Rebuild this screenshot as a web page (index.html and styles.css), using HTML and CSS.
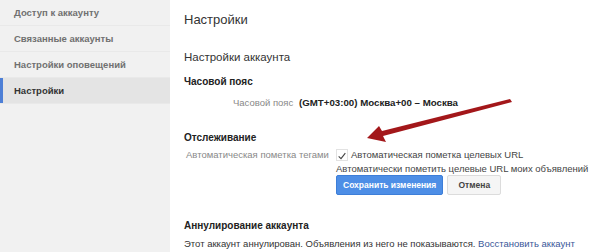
FILE: index.html
```html
<!DOCTYPE html>
<html lang="ru">
<head>
    <meta charset="UTF-8">
    <title>Настройки</title>
    <link rel="stylesheet" href="styles.css">
</head>
<body>
    <div class="page">
        <nav class="sidebar">
            <div class="nav-item">Доступ к аккаунту</div>
            <div class="nav-item">Связанные аккаунты</div>
            <div class="nav-item">Настройки оповещений</div>
            <div class="nav-item active">Настройки</div>
        </nav>

        <main class="content">
            <h1 class="page-title">Настройки</h1>
            <h2 class="section-title">Настройки аккаунта</h2>

            <div class="group">
                <h3 class="group-title">Часовой пояс</h3>
                <div class="tz-row">
                    <span class="field-label">Часовой пояс</span>
                    <span class="tz-value">(GMT+03:00) Москва+00 – Москва</span>
                </div>
            </div>

            <div class="group tracking">
                <h3 class="group-title">Отслеживание</h3>
                <div class="tracking-row">
                    <span class="field-label">Автоматическая пометка тегами</span>
                    <div class="tracking-field">
                        <label class="check">
                            <span class="check-box">
                                <svg width="12" height="12" viewBox="0 0 12 12">
                                    <path d="M2 6.5 L4.8 9.2 L10 2.5" fill="none" stroke="#444" stroke-width="1.3"/>
                                </svg>
                            </span>
                            Автоматическая пометка целевых URL
                        </label>
                        <div class="hint">Автоматически пометить целевые URL моих объявлений</div>
                        <div class="buttons">
                            <button class="btn btn-primary">Сохранить изменения</button>
                            <button class="btn btn-cancel">Отмена</button>
                        </div>
                    </div>
                </div>
            </div>

            <div class="group cancel">
                <h3 class="group-title">Аннулирование аккаунта</h3>
                <p class="note">Этот аккаунт аннулирован. Объявления из него не показываются. <a href="#">Восстановить аккаунт</a></p>
            </div>
        </main>

        <!-- annotation arrow drawn over the page -->
        <svg class="arrow" width="604" height="252" viewBox="0 0 604 252">
            <path d="M510 99 L382 131 L379 126 L367 138 L386 142 L383 136 L512 102 Z" fill="#a3171a"/>
        </svg>
    </div>
</body>
</html>
```

FILE: styles.css
```css
body {
    margin: 0;
    font-family: "Liberation Sans", Arial, sans-serif;
    background-color: #fff;
    color: #222;
}
.page {
    position: relative;
    display: flex;
    width: 604px;
    height: 252px;
    overflow: hidden;
}
.sidebar {
    width: 170px;
    flex-shrink: 0;
    background-color: #f1f1f1;
}
.nav-item {
    height: 25px;
    line-height: 25px;
    padding-left: 14px;
    font-size: 9.5px;
    font-weight: bold;
    color: #707070;
    border-bottom: 1px solid #e9e9e9;
}
.nav-item.active {
    background-color: #e4e4e4;
    color: #333;
    box-shadow: inset 3px 0 0 #4d7fd6;
}
.content {
    flex: 1;
    padding: 10px 0 0 14px;
}
.page-title {
    margin: 0;
    font-size: 13px;
    font-weight: normal;
    line-height: 20px;
    color: #333;
}
.section-title {
    margin: 17px 0 0;
    font-size: 11.5px;
    font-weight: normal;
    line-height: 20px;
    color: #333;
}
.group-title {
    margin: 0;
    font-size: 10px;
    font-weight: bold;
    line-height: 14px;
    color: #222;
}
.group {
    margin-top: 8px;
}
.field-label {
    font-size: 9.5px;
    color: #888;
    white-space: nowrap;
}
.tz-row {
    padding: 7px 0 0 49px;
    font-size: 10px;
    line-height: 14px;
}
.tz-value {
    margin-left: 3px;
    font-size: 9.7px;
    font-weight: bold;
    color: #222;
}
.tracking {
    margin-top: 21px;
}
.tracking-row {
    display: grid;
    grid-template-columns: 150px auto;
    margin-top: 2px;
    padding-left: 2px;
    font-size: 9.5px;
    line-height: 15px;
}
.check {
    display: flex;
    align-items: center;
    gap: 3px;
    height: 15px;
    color: #444;
}
.check-box {
    display: inline-flex;
    width: 12px;
    height: 12px;
    box-sizing: border-box;
    border: 1px solid #e2e2e2;
}
.hint {
    line-height: 13px;
    color: #444;
}
.buttons {
    display: flex;
    gap: 4px;
}
.btn {
    height: 20px;
    padding: 0 6px;
    font-family: inherit;
    font-size: 8.5px;
    font-weight: bold;
    color: #444;
    background-color: #f5f5f5;
    border: 1px solid #dcdcdc;
    border-radius: 2px;
}
.btn-primary {
    color: #fff;
    background-color: #4d8ee6;
    border-color: #3d7ed8;
}
.btn-cancel {
    width: 54px;
}
.cancel {
    margin-top: 24px;
}
.note {
    margin: 4px 0 0;
    font-size: 9.5px;
    line-height: 14px;
    color: #333;
}
.note a {
    color: #3a5899;
    text-decoration: none;
}
.arrow {
    position: absolute;
    left: 0;
    top: 0;
    pointer-events: none;
}
```
